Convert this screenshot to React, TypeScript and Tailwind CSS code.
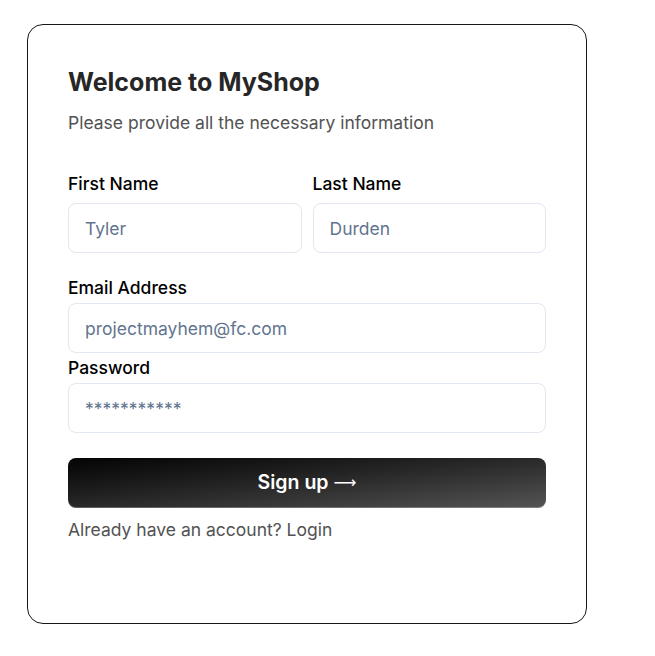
import React from 'react';

const Field: React.FC<{
  label: string;
  placeholder: string;
  type?: string;
  className?: string;
  gap: string;
}> = ({ label, placeholder, type = 'text', className = '', gap }) => (
  <div className={`flex flex-col ${className}`}>
    <label className={`text-[17.5px] font-medium text-black leading-6 ${gap}`}>{label}</label>
    <input
      type={type}
      placeholder={placeholder}
      className="h-[50px] w-full rounded-lg border border-slate-200 bg-white px-4 text-[17.5px] text-slate-700 placeholder:text-slate-500 outline-none"
    />
  </div>
);

export default function App() {
  return (
    <div className="min-h-screen bg-white pt-6 pl-[27px]" style={{ fontFamily: 'Inter, "Noto Sans", sans-serif' }}>
      <div className="w-[560px] h-[600px] rounded-2xl border border-neutral-900 bg-white px-10 pt-[41px]">
        <h2 className="text-[25px] font-bold text-neutral-800 leading-8">Welcome to MyShop</h2>
        <p className="mt-[13px] text-[17.5px] leading-6 text-neutral-600">Please provide all the necessary information</p>

        <form className="mt-[37px]" onSubmit={(e) => e.preventDefault()}>
          <div className="flex gap-[11px]">
            <Field label="First Name" placeholder="Tyler" className="flex-1" gap="mb-[7px]" />
            <Field label="Last Name" placeholder="Durden" className="flex-1" gap="mb-[7px]" />
          </div>
          <Field label="Email Address" placeholder="projectmayhem@fc.com" type="email" className="mt-[23px]" gap="mb-[3px]" />
          <Field label="Password" placeholder="***********" type="text" className="mt-[3px]" gap="mb-[3px]" />

          <button
            type="submit"
            className="mt-[25px] flex h-[50px] w-full items-center justify-center gap-[5px] rounded-lg bg-gradient-to-br from-[#050505] to-[#555555] text-[19.5px] font-semibold text-white shadow-[inset_0_-1px_0_rgba(255,255,255,0.25)]"
          >
            Sign up
            <span style={{ fontFamily: '"DejaVu Sans", sans-serif' }} className="text-[16px] font-normal">⟶</span>
          </button>
        </form>

        <p className="mt-[10px] text-[17.5px] leading-6 text-neutral-600">Already have an account? Login</p>
      </div>
    </div>
  );
}
